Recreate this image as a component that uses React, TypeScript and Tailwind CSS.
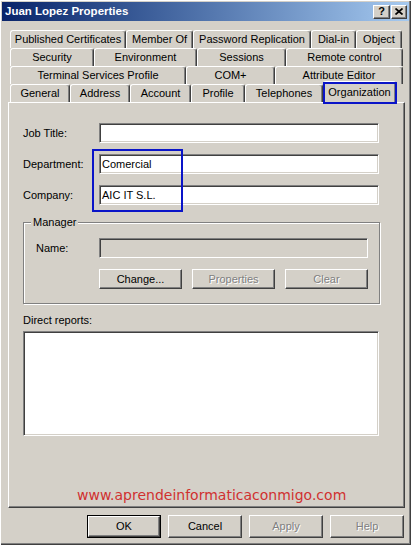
import React from "react";

const raised =
  "border border-t-white border-l-white border-r-[#404040] border-b-[#404040] shadow-[inset_-1px_-1px_0_#808080]";
const sunken =
  "border border-t-[#808080] border-l-[#808080] border-r-white border-b-white shadow-[inset_1px_1px_0_#404040,inset_-1px_-1px_0_#d4d0c8]";
const disabledText = "text-[#808080] [text-shadow:1px_1px_0_#ffffff]";
const tabCls =
  "h-[18px] shrink-0 flex items-center justify-center border-t border-l border-r border-t-white border-l-white border-r-[#404040] rounded-t-[3px] shadow-[inset_-1px_0_0_#808080] bg-[#d4d0c8] whitespace-nowrap";

const rows: { t: string; w: string }[][] = [
  [
    { t: "Published Certificates", w: "w-[116px]" },
    { t: "Member Of", w: "w-[67px]" },
    { t: "Password Replication", w: "w-[118px]" },
    { t: "Dial-in", w: "w-[45px]" },
    { t: "Object", w: "w-[46px]" },
  ],
  [
    { t: "Security", w: "w-[84px]" },
    { t: "Environment", w: "w-[103px]" },
    { t: "Sessions", w: "w-[89px]" },
    { t: "Remote control", w: "w-[117px]" },
  ],
  [
    { t: "Terminal Services Profile", w: "w-[176px]" },
    { t: "COM+", w: "w-[89px]" },
    { t: "Attribute Editor", w: "w-[128px]" },
  ],
];

const row4 = [
  { t: "General", w: "w-[60px]" },
  { t: "Address", w: "w-[60px]" },
  { t: "Account", w: "w-[61px]" },
  { t: "Profile", w: "w-[54px]" },
  { t: "Telephones", w: "w-[78px]" },
];

function Field({ label, value }: { label: string; value?: string }) {
  return (
    <div className="flex items-center">
      <div className="w-[76px]">{label}</div>
      <div className={`${sunken} bg-white w-[280px] h-[20px] flex items-center pl-[2px]`}>
        {value}
      </div>
    </div>
  );
}

export default function App() {
  return (
    <div className="w-[411px] h-[545px] overflow-hidden bg-[#d4d0c8] text-[11px] leading-[13px] text-black font-['Liberation_Sans',Arial,sans-serif] shadow-[inset_1px_1px_0_#ffffff,inset_-1px_-1px_0_#404040,inset_-2px_-2px_0_#808080] flex flex-col">
      {/* Title bar */}
      <div className="mx-[2px] mt-[2px] h-[19px] flex items-center justify-between bg-linear-to-r from-[#0a246a] to-[#a6caf0]">
        <div className="pl-[3px] text-white font-bold text-[11.5px]">Juan Lopez Properties</div>
        <div className="flex items-center gap-[1px] pr-[2px]">
          <div className={`${raised} bg-[#d4d0c8] w-[17px] h-[14px] flex items-center justify-center font-bold text-[11px] leading-none`}>
            ?
          </div>
          <div className={`${raised} bg-[#d4d0c8] w-[16px] h-[14px] flex items-center justify-center`}>
            <svg width="8" height="7" viewBox="0 0 8 7">
              <path d="M0.5 0.5 L7.5 6.5 M7.5 0.5 L0.5 6.5" stroke="#000" strokeWidth="1.7" fill="none" />
            </svg>
          </div>
        </div>
      </div>

      {/* Tabs */}
      <div className="mt-[9px] pl-[10px] flex flex-col">
        {rows.map((r, i) => (
          <div key={i} className="flex h-[18px]">
            {r.map((tab) => (
              <div key={tab.t} className={`${tabCls} ${tab.w}`}>
                {tab.t}
              </div>
            ))}
          </div>
        ))}
        <div className="flex h-[18px] items-end relative z-10">
          {row4.map((tab) => (
            <div key={tab.t} className={`${tabCls} ${tab.w}`}>
              {tab.t}
            </div>
          ))}
          <div className="relative w-[73px] h-[22px] mb-[-1px] shrink-0 flex items-center justify-center border-t border-l border-r border-t-white border-l-white border-r-[#404040] rounded-t-[3px] shadow-[inset_-1px_0_0_#808080] bg-[#d4d0c8]">
            Organization
            <div className="absolute left-[-1px] right-[-2px] top-[0px] bottom-[-1px] border-2 border-[#0a14c8]" />
          </div>
        </div>
      </div>

      {/* Panel */}
      <div className={`${raised} ml-[8px] w-[397px] h-[406px] shrink-0 bg-[#d4d0c8] pl-[14px] pt-[20px] flex flex-col`}>
        <div className="relative flex flex-col gap-[11px]">
          <Field label="Job Title:" />
          <Field label="Department:" value="Comercial" />
          <Field label="Company:" value="AIC IT S.L." />
          <div className="absolute left-[69px] top-[26px] w-[91px] h-[63px] border-2 border-[#0a14c8]" />
        </div>

        <fieldset className="mt-[11px] w-[357px] border border-[#808080] shadow-[1px_1px_0_#ffffff,inset_1px_1px_0_#ffffff] pl-[12px] pt-[9px] pb-[14px]">
          <legend className="ml-[-5px] px-[2px] bg-[#d4d0c8] leading-[13px]">Manager</legend>
          <div className="flex items-center">
            <div className="w-[63px]">Name:</div>
            <div className={`${sunken} bg-[#d4d0c8] w-[269px] h-[20px]`} />
          </div>
          <div className="mt-[11px] ml-[63px] w-[269px] flex justify-between">
            <div className={`${raised} bg-[#d4d0c8] w-[83px] h-[20px] flex items-center justify-center`}>Change...</div>
            <div className={`${raised} bg-[#d4d0c8] w-[83px] h-[20px] flex items-center justify-center ${disabledText}`}>Properties</div>
            <div className={`${raised} bg-[#d4d0c8] w-[83px] h-[20px] flex items-center justify-center ${disabledText}`}>Clear</div>
          </div>
        </fieldset>

        <div className="mt-[10px]">Direct reports:</div>
        <div className={`${sunken} bg-white mt-[4px] w-[356px] h-[105px]`} />

        <div className="mt-[51px] ml-[54px] text-[14px] leading-[17px] text-[#d03030] font-['DejaVu_Sans',Verdana,sans-serif]">
          www.aprendeinformaticaconmigo.com
        </div>
      </div>

      {/* Bottom buttons */}
      <div className="mt-[7px] pr-[7px] flex justify-end gap-[7px]">
        <div className="w-[74px] h-[23px] border border-black">
          <div className={`${raised} w-full h-full bg-[#d4d0c8] flex items-center justify-center`}>OK</div>
        </div>
        <div className={`${raised} w-[74px] h-[23px] bg-[#d4d0c8] flex items-center justify-center`}>Cancel</div>
        <div className={`${raised} w-[74px] h-[23px] bg-[#d4d0c8] flex items-center justify-center ${disabledText}`}>Apply</div>
        <div className={`${raised} w-[74px] h-[23px] bg-[#d4d0c8] flex items-center justify-center ${disabledText}`}>Help</div>
      </div>
    </div>
  );
}
